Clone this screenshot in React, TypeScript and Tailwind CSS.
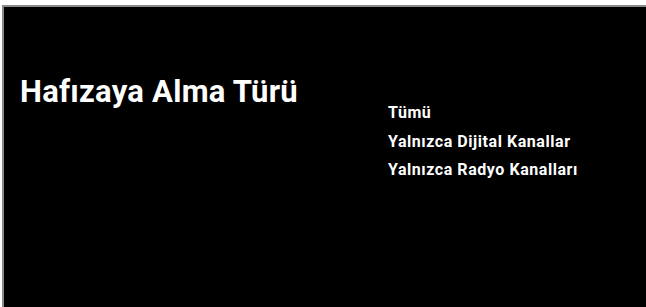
export default function App() {
  const options = ["Tümü", "Yalnızca Dijital Kanallar", "Yalnızca Radyo Kanalları"];

  return (
    <div className="h-[307px] w-[646px] overflow-hidden bg-white pl-[2px] pt-[5px]" style={{ fontFamily: "Roboto, 'Noto Sans', sans-serif" }}>
      <div className="flex h-[302px] border-l-2 border-t-2 border-[#8a8a8a] bg-black pl-[16px]">
        <div className="w-[368px] pt-[69px]">
          <h1 className="text-[31px] font-bold leading-none tracking-[0.25px] text-white">Hafızaya Alma Türü</h1>
        </div>
        <div className="flex flex-col gap-[12.5px] pt-[98px]">
          {options.map((item) => (
            <div key={item} className="text-[16px] font-bold leading-[16px] tracking-[0.55px] text-white">
              {item}
            </div>
          ))}
        </div>
      </div>
    </div>
  );
}
